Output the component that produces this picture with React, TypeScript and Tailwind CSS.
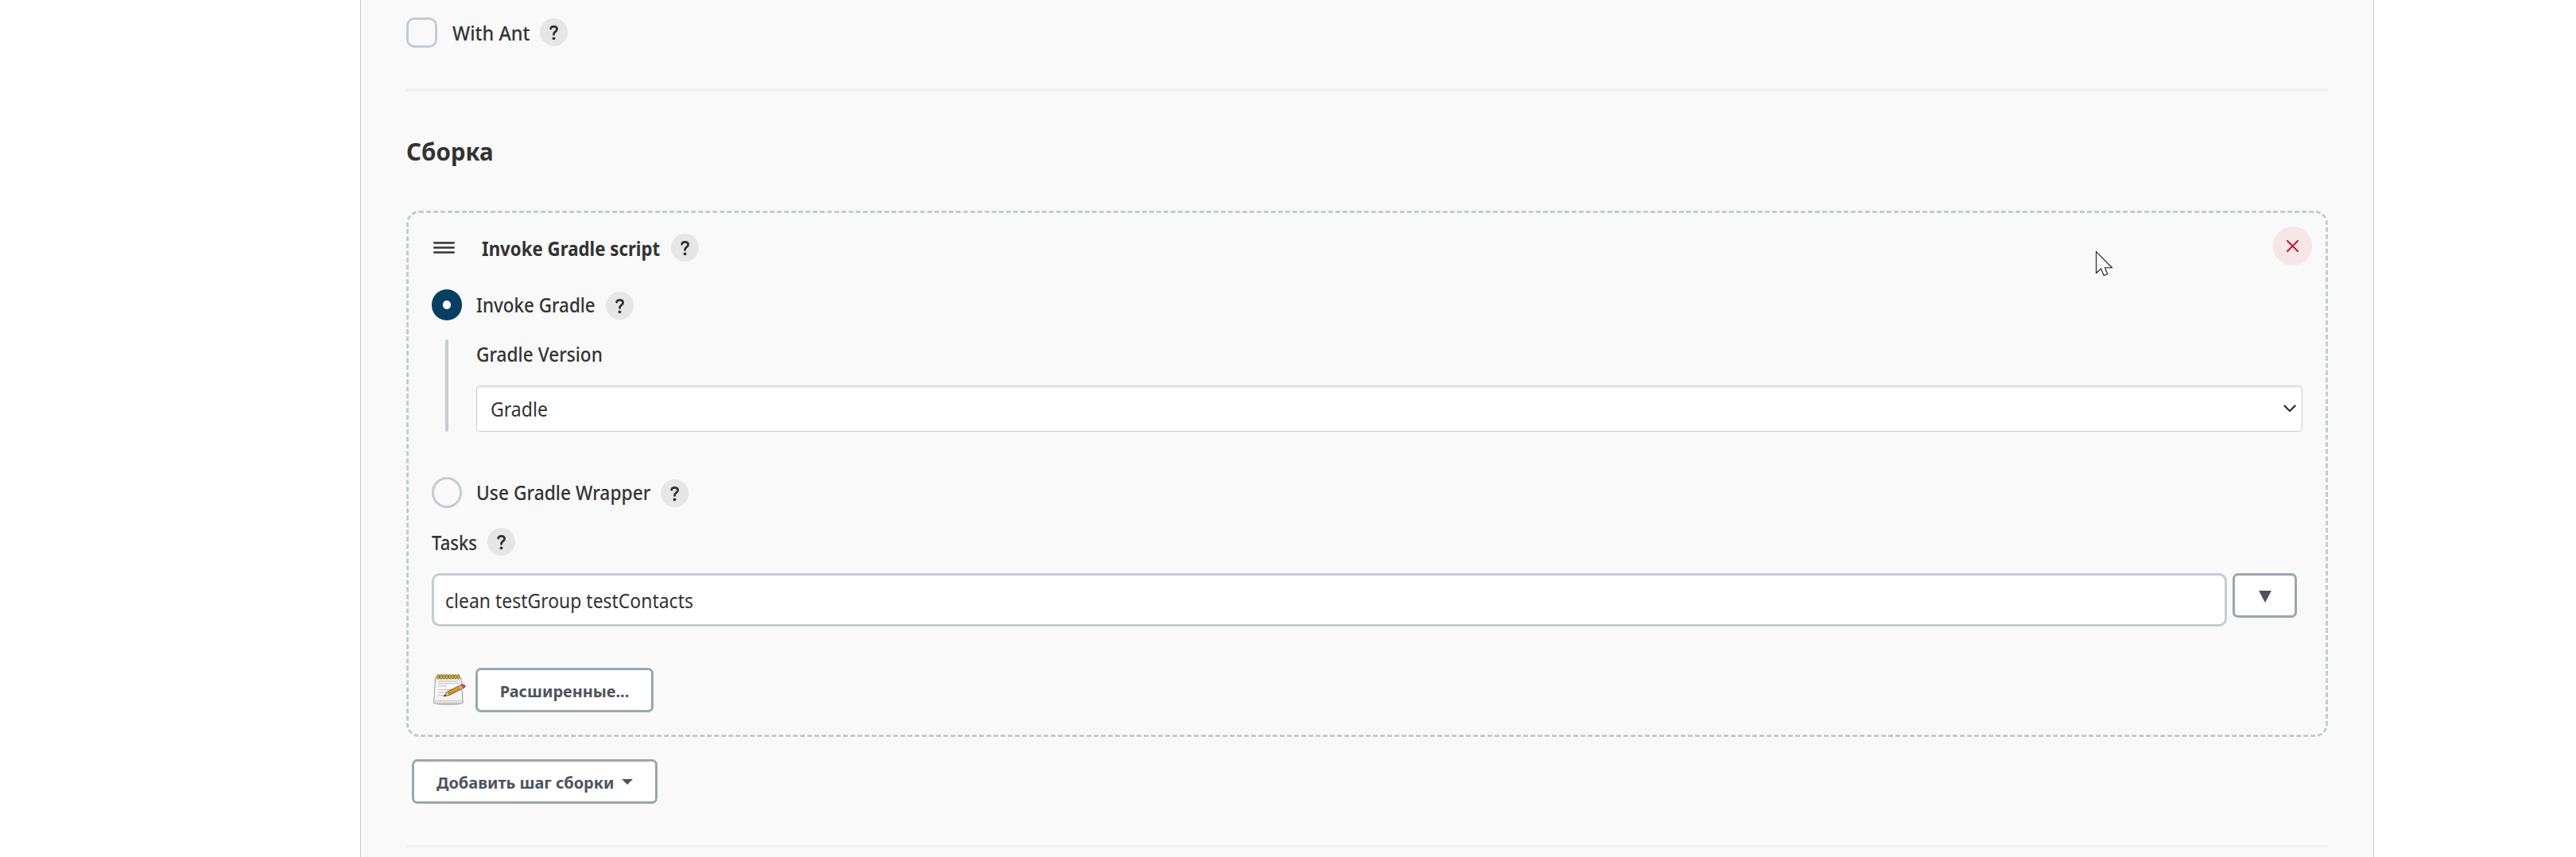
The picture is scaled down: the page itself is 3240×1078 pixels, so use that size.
import type { ReactNode } from "react";

function Help() {
  return (
    <button className="flex size-[35px] shrink-0 items-center justify-center rounded-full bg-[#e6e6e6]">
      <svg width="35" height="35" viewBox="0 0 35 35" fill="none">
        <path d="M13.7 13.2C13.9 11.2 15.4 10.3 17.6 10.3C19.9 10.3 21.6 11.6 21.6 13.6C21.6 15.3 20.6 16 19.4 16.9C18.1 17.9 17.5 18.5 17.5 20.4" stroke="#333" strokeWidth="2.8" strokeLinecap="round" strokeLinejoin="round" />
        <circle cx="17.5" cy="25.3" r="1.9" fill="#333" />
      </svg>
    </button>
  );
}

function Text({ box, fit, children }: { box: string; fit: string; children: ReactNode }) {
  return (
    <span className={`block shrink-0 whitespace-nowrap text-[24.5px] leading-9 ${box}`}>
      <span className={`inline-block origin-left translate-y-px ${fit}`}>{children}</span>
    </span>
  );
}

function Notepad() {
  return (
    <svg width="41" height="40" viewBox="0 0 41 40" fill="none" className="shrink-0">
      <defs>
        <linearGradient id="paper" x1="0" y1="0" x2="0" y2="1">
          <stop offset="0" stopColor="#e4e4e4" />
          <stop offset="0.3" stopColor="#fcfcfc" />
          <stop offset="1" stopColor="#eeeeee" />
        </linearGradient>
        <linearGradient id="wood" x1="0" y1="0" x2="0.5" y2="1">
          <stop offset="0" stopColor="#efc36b" />
          <stop offset="1" stopColor="#b87a1c" />
        </linearGradient>
      </defs>
      <ellipse cx="18.5" cy="37.6" rx="15" ry="1.6" fill="#c9c9c9" />
      <path d="M4 3.5H33.5Q34.7 3.5 34.9 5L37.2 35Q37.3 37 35.5 37H2Q.4 37 .6 35L2.7 5Q2.8 3.5 4 3.5Z" fill="url(#paper)" stroke="#999b98" />
      <path d="M1.4 33.7H36.4" stroke="#c6c6c6" />
      <path d="M1.4 35.5H36.4" stroke="#dcdcdc" strokeWidth="1.5" />
      <path d="M6.5 9H31.5M6 12H32M6 15H17M6 19.5H24M6 23H17M6 26.7H20" stroke="#bcbcbc" strokeWidth="1.1" />
      <g stroke="#6f6012" strokeWidth="0.9" fill="#dcc548">
        {[5, 8.6, 12.2, 15.8, 19.4, 23, 26.6, 30.2].map((x) => (
          <rect key={x} x={x} y="0.6" width="2.6" height="5.4" rx="1.3" />
        ))}
      </g>
      <path d="M13.2 27.8L18 21.8L35 13.3L37.5 17.8L20.5 26.3Z" fill="url(#wood)" stroke="#80500f" strokeWidth="0.9" strokeLinejoin="round" />
      <path d="M13.2 27.8L18 21.8L20.5 26.3Z" fill="#e8c994" stroke="#80500f" strokeWidth="0.6" />
      <path d="M13 28L15 25.4L16.3 27.2Z" fill="#222" />
      <path d="M32.2 14.7L35.2 13.2L37.7 17.8L34.7 19.2Z" fill="#b9bdbd" stroke="#777" strokeWidth="0.5" />
      <path d="M35.2 13.2C38 12 40.2 13.5 40.2 15.3C40.2 16.6 39.2 17.2 37.7 17.8Z" fill="#e04b45" stroke="#b52a2a" strokeWidth="0.6" />
    </svg>
  );
}

const outlined = "shrink-0 rounded-[7px] border-[3px] border-[#9aa6ad] bg-white text-xl leading-7 font-bold tracking-[-0.05px] text-[#4d545d]";

export default function App() {
  return (
    <div className="relative h-[1078px] overflow-hidden bg-white font-['Noto_Sans','Open_Sans',sans-serif] text-[#333]">
      <main className="ml-[453px] flex h-full w-[2533px] flex-col border-x border-[#c4cdd1] bg-[#f9f9f9] px-[57px] pt-[22px]">
        <div className="flex h-[38px] shrink-0 items-center">
          <span className="mr-[19px] h-[38px] w-[39px] rounded-[10px] border-[3px] border-[#c4cdd1]" />
          <Text box="w-[110px] font-medium" fit="scale-x-[0.961]">With Ant</Text>
          <div className="-mt-px"><Help /></div>
        </div>
        <div className="mt-[52px] h-[3px] shrink-0 bg-[#f1f1f1]" />
        <h2 className="mt-14 shrink-0 text-[29.5px] leading-10 font-bold">Сборка</h2>

        <section className="mt-[54px] h-[662px] shrink-0 rounded-2xl border-[3px] border-dashed border-[#c4cdd1] px-[29px] pt-[17px]">
          <div className="flex h-[49px] items-center">
            <div className="flex items-center pt-1">
              <svg width="27" height="15" viewBox="0 0 27 15" className="mr-[34px] ml-0.5" stroke="#333" strokeWidth="2.6" strokeLinecap="round">
                <path d="M1.3 1.5H25.7M1.3 7.5H25.7M1.3 13.5H25.7" />
              </svg>
              <Text box="w-[238px] font-bold" fit="scale-x-[0.908]">Invoke Gradle script</Text>
              <Help />
            </div>
            <button className="-mr-3 ml-auto flex size-[49px] items-center justify-center rounded-full bg-[#f6e6e8]">
              <svg width="15" height="15" viewBox="0 0 15 15" stroke="#c4152f" strokeWidth="2" strokeLinecap="round">
                <path d="M1 1L14 14M14 1L1 14" />
              </svg>
            </button>
          </div>

          <div className="mt-[30px] flex h-[39px] items-center">
            <span className="mr-[18px] flex h-[39px] w-[38px] items-center justify-center rounded-full bg-[#073f63]">
              <span className="h-[11px] w-2.5 rounded-full bg-white" />
            </span>
            <div className="-mt-0.5"><Text box="w-[163px] font-medium" fit="scale-x-[0.915]">Invoke Gradle</Text></div>
            <div className="mt-0.5"><Help /></div>
          </div>

          <div className="mt-6 ml-[17px] flex h-[116px]">
            <div className="mr-[35px] w-1 rounded-full bg-[#c4cdd1]" />
            <div className="grow">
              <Text box="w-[163px] font-medium" fit="scale-x-[0.925]">Gradle Version</Text>
              <div className="mt-[22px] flex h-[58px] items-center justify-between rounded-[5px] border border-[#c4cdd1] bg-white pr-[7px] pl-[17px] shadow-[inset_0_2px_2px_rgba(0,0,0,0.07)]">
                <Text box="w-[80px]" fit="scale-x-[0.942]">Gradle</Text>
                <svg width="16" height="10" viewBox="0 0 16 10" fill="none" stroke="#333" strokeWidth="2.3">
                  <path d="M0.8 0.9L8 8L15.2 0.9" />
                </svg>
              </div>
            </div>
          </div>

          <div className="mt-[57px] flex h-[39px] items-center">
            <span className="mr-[18px] h-[39px] w-[38px] rounded-full border-[3px] border-[#c4cdd1]" />
            <div className="-mt-0.5"><Text box="w-[232px] font-medium" fit="scale-x-[0.93]">Use Gradle Wrapper</Text></div>
            <div className="mt-0.5"><Help /></div>
          </div>

          <div className="mt-[25px] flex h-[35px] items-center">
            <Text box="w-[70px] font-medium" fit="scale-x-[0.9]">Tasks</Text>
            <Help />
          </div>

          <div className="mt-[22px] flex h-[67px] items-start gap-[7px]">
            <div className="flex h-[67px] w-[2258px] items-center rounded-[10px] border-[3px] border-[#c4cdd1] bg-white pl-3.5">
              <Text box="w-[400px]" fit="scale-x-[0.937]">clean testGroup testContacts</Text>
            </div>
            <button className={`flex h-14 w-[81px] items-center justify-center pt-0.5 ${outlined}`}>
              <svg width="16" height="15" viewBox="0 0 16 15" fill="#4d545d">
                <path d="M0 0H16L8 15Z" />
              </svg>
            </button>
          </div>

          <div className="mt-[52px] flex h-14 items-center pl-0.5">
            <Notepad />
            <button className={`ml-3 h-14 w-56 pt-[3px] ${outlined}`}>Расширенные...</button>
          </div>
        </section>

        <button className={`mt-7 ml-[7px] flex h-14 w-[309px] items-center pl-7 ${outlined}`}>
          <span className="mt-[3px] w-[233px] text-left whitespace-nowrap">Добавить шаг сборки</span>
          <svg width="14" height="7" viewBox="0 0 14 7" fill="#4d545d">
            <path d="M0 0H14L7 7Z" />
          </svg>
        </button>
        <div className="mt-[52px] h-[3px] shrink-0 bg-[#f1f1f1]" />
      </main>

      <svg className="absolute top-[315px] left-[2635px]" width="24" height="34" viewBox="0 0 24 34">
        <path d="M1.5 1.5V28.5L7.5 23L11.2 31.5L15.7 29.7L12.5 21.8H21.5Z" fill="#fff" stroke="#1b1b24" strokeWidth="1.1" />
      </svg>
    </div>
  );
}
